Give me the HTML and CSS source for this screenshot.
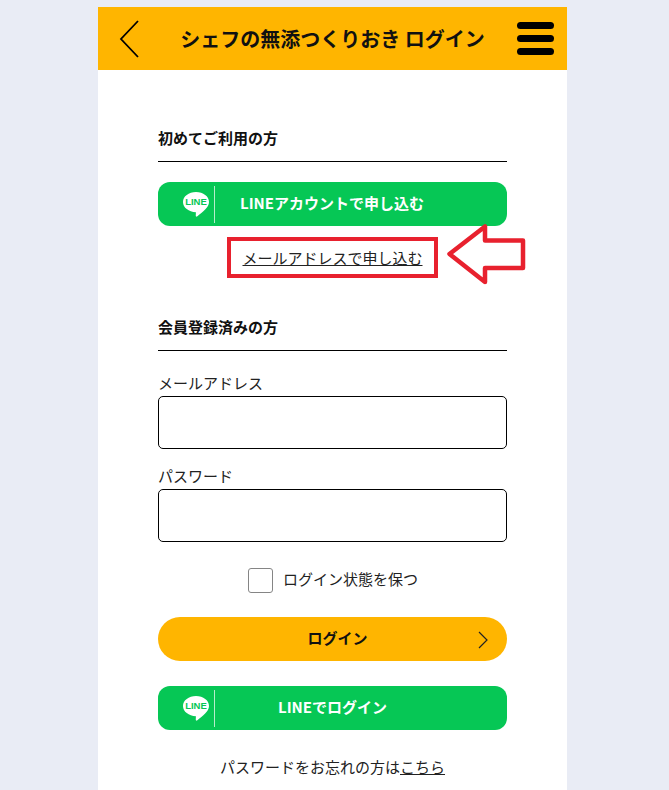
FILE: index.html
```html
<!DOCTYPE html>
<html lang="ja">

<head>
    <meta charset="UTF-8">
    <meta name="viewport" content="width=device-width, initial-scale=1.0">
    <title>シェフの無添つくりおき ログイン</title>
    <link rel="stylesheet" href="styles.css">
</head>

<body>
    <div class="container">
        <header class="header">
            <svg class="back-icon" viewBox="0 0 22 38" width="22" height="38">
                <path d="M20 1 L3 19 L20 37" fill="none" stroke="#000" stroke-width="1.8" />
            </svg>
            <h1>シェフの無添つくりおき ログイン</h1>
            <div class="menu-icon">
                <span></span>
                <span></span>
                <span></span>
            </div>
        </header>

        <main class="content">
            <h2 class="section-title">初めてご利用の方</h2>

            <a class="line-btn">
                <span class="line-logo">
                    <svg viewBox="0 0 26 25" width="26" height="25">
                        <path d="M13 0 C20.2 0 26 4.4 26 10 C26 15.6 19.6 20 14.4 24.2 C13 25.2 12.6 24.4 12.8 22.8 L12.9 20.2 C5.8 20 0 15.6 0 10 C0 4.4 5.8 0 13 0 Z" fill="#fff" />
                        <text x="13" y="13.4" text-anchor="middle" class="line-logo-text">LINE</text>
                    </svg>
                </span>
                <span class="line-label">LINEアカウントで申し込む</span>
            </a>

            <div class="mail-link">
                <a>メールアドレスで申し込む</a>
            </div>

            <h2 class="section-title second">会員登録済みの方</h2>

            <label class="field-label first">メールアドレス</label>
            <input class="field" type="text">

            <label class="field-label">パスワード</label>
            <input class="field" type="password">

            <div class="keep-login">
                <span class="checkbox"></span>
                <span class="keep-text">ログイン状態を保つ</span>
            </div>

            <a class="login-btn">
                ログイン
                <svg class="login-arrow" viewBox="0 0 10 18" width="10" height="18">
                    <path d="M1 1 L9 9 L1 17" fill="none" stroke="#222" stroke-width="1.2" />
                </svg>
            </a>

            <a class="line-btn">
                <span class="line-logo">
                    <svg viewBox="0 0 26 25" width="26" height="25">
                        <path d="M13 0 C20.2 0 26 4.4 26 10 C26 15.6 19.6 20 14.4 24.2 C13 25.2 12.6 24.4 12.8 22.8 L12.9 20.2 C5.8 20 0 15.6 0 10 C0 4.4 5.8 0 13 0 Z" fill="#fff" />
                        <text x="13" y="13.4" text-anchor="middle" class="line-logo-text">LINE</text>
                    </svg>
                </span>
                <span class="line-label center">LINEでログイン</span>
            </a>

            <p class="forgot">パスワードをお忘れの方は<a>こちら</a></p>
        </main>

        <!-- red marks on top of the screenshot -->
        <div class="red-box"></div>
        <svg class="red-arrow" viewBox="0 0 82 64" width="82" height="64">
            <path d="M3.5 32 L39 4.5 L39 18.5 L77 18.5 L77 46 L39 46 L39 60 Z" fill="#fff" stroke="#e8212e" stroke-width="4.5" stroke-linejoin="round" />
        </svg>
    </div>
</body>

</html>
```

FILE: styles.css
```css
* {
    margin: 0;
    padding: 0;
    box-sizing: border-box;
    font-family: "Noto Sans CJK JP", "Noto Sans", sans-serif;
}

html,
body {
    height: 790px;
    overflow: hidden;
}

body {
    background: #e9ecf5;
    padding: 7px 102px 0 98px;
    color: #222;
}

.container {
    position: relative;
    background: #fff;
    height: 783px;
}

.header {
    display: flex;
    align-items: center;
    height: 63px;
    padding: 0 13px 0 20px;
    background: #ffb500;
}

.back-icon {
    flex: none;
}

.header h1 {
    flex: 1;
    text-align: center;
    font-size: 20px;
    line-height: 30px;
    font-weight: 700;
    color: #111;
    padding-left: 8px;
}

.menu-icon {
    display: flex;
    flex-direction: column;
    gap: 6px;
    width: 37px;
}

.menu-icon span {
    height: 7px;
    border-radius: 4px;
    background: #000;
}

.content {
    padding: 53px 60px 0;
}

.section-title {
    height: 39px;
    font-size: 15px;
    line-height: 30px;
    font-weight: 700;
    color: #111;
    border-bottom: 1px solid #000;
    margin-bottom: 20px;
}

.section-title.second {
    margin-bottom: 0;
}

.line-btn {
    display: flex;
    align-items: center;
    height: 44px;
    border-radius: 12px;
    background: #06c755;
    color: #fff;
}

.line-logo {
    display: flex;
    align-items: center;
    flex: none;
    width: 57px;
    height: 37px;
    padding-left: 25px;
    border-right: 1px solid #b5edcb;
}

.line-logo-text {
    font-family: "Liberation Sans", sans-serif;
    font-size: 9.5px;
    font-weight: 700;
    fill: #06c755;
}

.line-label {
    padding-left: 25px;
    padding-bottom: 4px;
    font-size: 15px;
    font-weight: 700;
}

.line-label.center {
    padding-left: 63px;
}

.mail-link {
    height: 65px;
    padding-top: 20px;
    margin-bottom: 21px;
    text-align: center;
    font-size: 15px;
    line-height: 24px;
}

.mail-link a,
.forgot a {
    text-decoration: underline;
}

.field-label {
    display: block;
    font-size: 15px;
    line-height: 20px;
    margin-top: 17px;
    margin-bottom: 3px;
}

.field-label.first {
    margin-top: 22px;
}

.field {
    display: block;
    width: 100%;
    height: 53px;
    border: 1px solid #000;
    border-radius: 5px;
    background: #fff;
}

.keep-login {
    display: flex;
    justify-content: center;
    align-items: center;
    gap: 10px;
    margin-top: 26px;
    padding-left: 1px;
    font-size: 15px;
}

.keep-text {
    line-height: 20px;
    padding-bottom: 4px;
}

.checkbox {
    width: 25px;
    height: 25px;
    border: 1px solid #858585;
    border-radius: 3px;
}

.login-btn {
    position: relative;
    display: block;
    height: 44px;
    margin-top: 24px;
    margin-bottom: 25px;
    padding-left: 10px;
    border-radius: 22px;
    background: #ffb500;
    text-align: center;
    font-size: 15px;
    line-height: 42px;
    font-weight: 700;
    color: #111;
}

.login-arrow {
    position: absolute;
    right: 19px;
    top: 14px;
}

.forgot {
    margin-top: 26px;
    text-align: center;
    font-size: 15px;
    line-height: 22px;
}

.red-box {
    position: absolute;
    left: 129px;
    top: 230px;
    width: 211px;
    height: 41px;
    border: 4px solid #e8212e;
}

.red-arrow {
    position: absolute;
    left: 348px;
    top: 215px;
}
```
